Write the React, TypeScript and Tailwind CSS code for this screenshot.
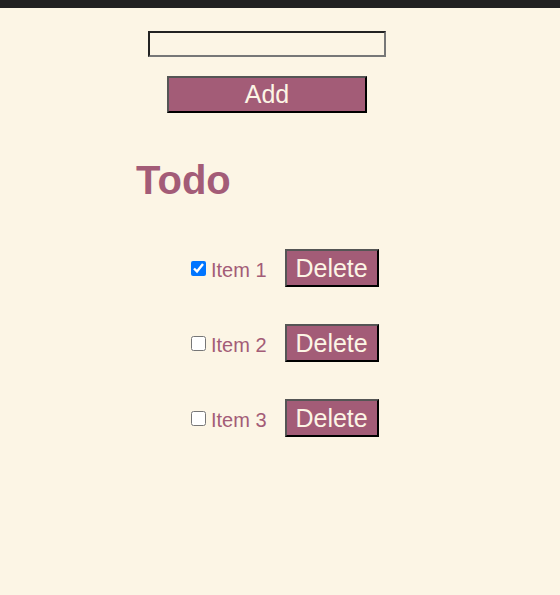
import React, { useState } from "react";

const items = [
  { id: 1, label: "Item 1", done: true },
  { id: 2, label: "Item 2", done: false },
  { id: 3, label: "Item 3", done: false },
];

export default function App() {
  const [todos, setTodos] = useState(items);
  return (
    <div className="min-h-[595px] bg-[#fcf5e5] font-['Liberation_Sans',Arial,sans-serif]">
      <div className="h-[8px] bg-[#212121]" />
      <div className="flex flex-col items-start">
        <input
          type="text"
          className="ml-[148px] mt-[23px] w-[238px] h-[26px] border-2 border-t-[#222] border-l-[#222] border-b-[#777] border-r-[#777] bg-transparent outline-none"
        />
        <button className="ml-[167px] mt-[19px] w-[200px] h-[37px] border-2 border-t-[#555] border-l-[#555] border-b-black border-r-black bg-[#a35c77] text-[#fcf5e5] text-[25px] leading-none flex items-center justify-center">
          Add
        </button>
        <h1 className="ml-[136px] mt-[44px] text-[40px] leading-[46px] font-bold text-[#a35c77]">
          Todo
        </h1>
        <div className="flex flex-col gap-[37px] mt-[46px]">
          {todos.map((t) => (
            <div key={t.id} className="flex items-center ml-[191px] h-[38px]">
              <input
                type="checkbox"
                checked={t.done}
                onChange={() =>
                  setTodos(todos.map((x) => (x.id === t.id ? { ...x, done: !x.done } : x)))
                }
                className="m-0 w-[15px] h-[15px]"
              />
              <span className="ml-[5px] mt-[5px] text-[20px] leading-[23px] text-[#a35c77]">
                {t.label}
              </span>
              <button className="ml-[18px] w-[94px] h-[38px] border-2 border-t-[#555] border-l-[#555] border-b-black border-r-black bg-[#a35c77] text-[#fcf5e5] text-[25px] leading-none flex items-center justify-center">
                Delete
              </button>
            </div>
          ))}
        </div>
      </div>
    </div>
  );
}
